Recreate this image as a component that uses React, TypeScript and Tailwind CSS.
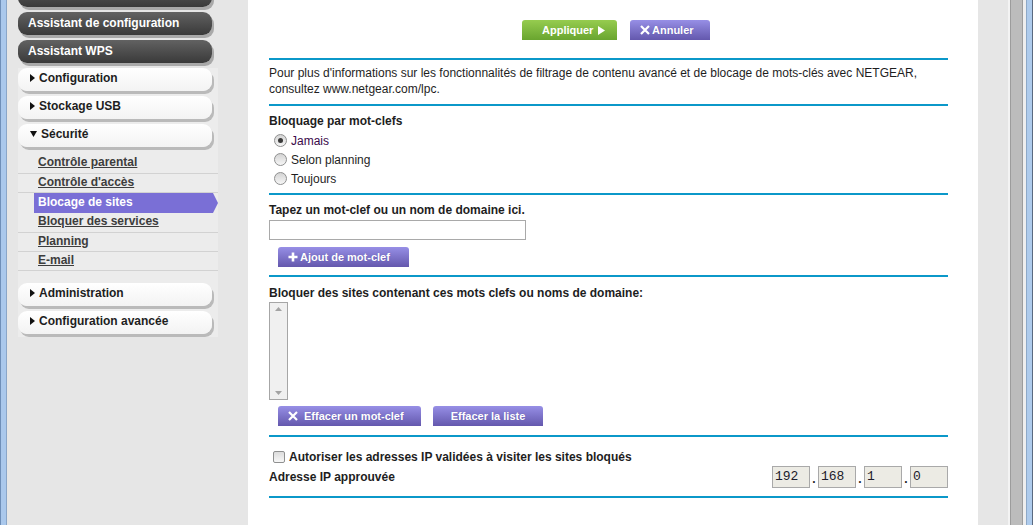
import React from "react";

function Tri({ down = false }: { down?: boolean }) {
  return down ? (
    <svg width="7" height="6" viewBox="0 0 7 6" className="shrink-0">
      <polygon points="0,0 7,0 3.5,6" fill="#111" />
    </svg>
  ) : (
    <svg width="5" height="8" viewBox="0 0 5 8" className="shrink-0">
      <polygon points="0,0 5,4 0,8" fill="#111" />
    </svg>
  );
}

function DarkBtn({ label, className = "" }: { label: string; className?: string }) {
  return (
    <div
      className={
        "w-[194px] h-[23px] shrink-0 rounded-[9px] bg-linear-to-b from-[#626262] to-[#3a3a3a] shadow-[2px_3px_0_0_#a9a9a9] flex items-center pl-[10px] pb-[2px] text-white font-bold text-[12px] " +
        className
      }
    >
      {label}
    </div>
  );
}

function WhiteBtn({ label, open = false, className = "" }: { label: string; open?: boolean; className?: string }) {
  return (
    <div
      className={
        "w-[194px] h-[23px] shrink-0 rounded-[9px] bg-linear-to-b from-white to-[#f3f3f3] shadow-[2px_3px_0_0_#bababa] flex items-center pl-[12px] pb-[3px] gap-[4px] text-[#1e1e1e] font-bold text-[12px] " +
        className
      }
    >
      <Tri down={open} />
      <span>{label}</span>
    </div>
  );
}

function SubItem({ label, className = "h-[20px]" }: { label: string; className?: string }) {
  return (
    <div className={"border-b border-[#d2d2d2] flex items-center pl-[20px] pb-[3px] text-[#3d3d3d] font-bold underline text-[12px] " + className}>
      {label}
    </div>
  );
}

function Sidebar() {
  return (
    <div className="w-[241px] shrink-0 pl-[11px] flex flex-col">
      <DarkBtn label="" className="mt-[-16px]" />
      <DarkBtn label="Assistant de configuration" className="mt-[5px]" />
      <DarkBtn label="Assistant WPS" className="mt-[5px]" />
      <div className="w-[200px] mt-[5px] bg-[#ececec] flex flex-col pb-[3px]">
        <WhiteBtn label="Configuration" />
        <WhiteBtn label="Stockage USB" className="mt-[5px]" />
        <WhiteBtn label="Sécurité" open className="mt-[5px]" />
        <div className="mt-[7px] flex flex-col">
          <SubItem label="Contrôle parental" className="h-[20px]" />
          <SubItem label="Contrôle d'accès" className="h-[19px]" />
          <div className="h-[20px] ml-[16px] pl-[4px] pb-[3px] flex items-center bg-[#7a6fd6] text-white font-bold text-[12px] [clip-path:polygon(0_0,calc(100%-5px)_0,100%_50%,calc(100%-5px)_100%,0_100%)]">
            Blocage de sites
          </div>
          <SubItem label="Bloquer des services" className="h-[20px]" />
          <SubItem label="Planning" className="h-[19px]" />
          <SubItem label="E-mail" className="h-[19px]" />
        </div>
        <WhiteBtn label="Administration" className="mt-[12px]" />
        <WhiteBtn label="Configuration avancée" className="mt-[5px]" />
      </div>
    </div>
  );
}

function Line({ className = "" }: { className?: string }) {
  return <div className={"h-[2px] w-[679px] bg-[#0b98c9] " + className} />;
}

function XIcon() {
  return (
    <svg width="10" height="10" viewBox="0 0 10 10" className="shrink-0">
      <path d="M1 1 L9 9 M9 1 L1 9" stroke="white" strokeWidth="2.2" />
    </svg>
  );
}

function PlusIcon() {
  return (
    <svg width="10" height="10" viewBox="0 0 10 10" className="shrink-0">
      <path d="M5 0.5 V9.5 M0.5 5 H9.5" stroke="white" strokeWidth="2.6" />
    </svg>
  );
}

function PurpleBtn({ children, className = "" }: { children: React.ReactNode; className?: string }) {
  return (
    <div
      className={
        "h-[20px] rounded-t-[3px] bg-linear-to-b from-[#978fe6] to-[#6458ad] flex items-center text-white font-bold text-[11px] [text-shadow:0_0_1px_rgba(80,70,150,0.6)] " +
        className
      }
    >
      {children}
    </div>
  );
}

function Radio({ checked = false, label }: { checked?: boolean; label: string }) {
  return (
    <div className="h-[19px] flex items-center pl-[5px] gap-[4px]">
      <div className="w-[13px] h-[13px] rounded-full border border-[#8f9090] bg-linear-to-b from-[#d4d4d4] to-[#f6f6f6] flex items-center justify-center">
        {checked && <div className="w-[5px] h-[5px] rounded-full bg-[#3a3a3a]" />}
      </div>
      <span className={checked ? "text-[#3a0a4a]" : ""}>{label}</span>
    </div>
  );
}

function IpBox({ v }: { v: string }) {
  return (
    <div className="w-[38px] h-[22px] border border-[#a9a9a9] bg-[#ecebe4] flex items-center pl-[2px] font-['Liberation_Mono','Courier_New',monospace] text-[13px] text-[#1c1c2c]">
      {v}
    </div>
  );
}

function Dot() {
  return <div className="w-[8px] h-[22px] flex items-end justify-center pb-[3px] font-bold leading-none text-[12px]">.</div>;
}

function Main() {
  return (
    <div className="w-[730px] shrink-0 bg-white pl-[21px] pr-[30px] text-[#1e1e1e] text-[12px]">
      <div className="flex pt-[20px] pl-[253px] gap-[13px]">
        <div className="w-[95px] h-[20px] rounded-t-[3px] bg-linear-to-b from-[#96cc4f] to-[#69a52f] flex items-center pl-[20px] gap-[5px] text-white font-bold text-[11px]">
          <span>Appliquer</span>
          <svg width="7" height="9" viewBox="0 0 7 9">
            <polygon points="0,0 7,4.5 0,9" fill="white" />
          </svg>
        </div>
        <PurpleBtn className="w-[80px] pl-[10px] gap-[2px]">
          <XIcon />
          <span>Annuler</span>
        </PurpleBtn>
      </div>
      <Line className="mt-[18px]" />
      <p className="pt-[5px] leading-[16px]">
        Pour plus d'informations sur les fonctionnalités de filtrage de contenu avancé et de blocage de mots-clés avec NETGEAR,
        <br />
        consultez www.netgear.com/lpc.
      </p>
      <Line className="mt-[7px]" />
      <div className="pt-[6px] leading-[19px] font-bold">Bloquage par mot-clefs</div>
      <Radio checked label="Jamais" />
      <Radio label="Selon planning" />
      <Radio label="Toujours" />
      <Line className="mt-[5px]" />
      <div className="pt-[7px] leading-[16px] font-bold">Tapez un mot-clef ou un nom de domaine ici.</div>
      <div className="mt-[2px] w-[257px] h-[20px] border border-[#a9a9a9] bg-white" />
      <PurpleBtn className="mt-[7px] ml-[9px] w-[131px] pl-[10px] gap-[2px]">
        <PlusIcon />
        <span>Ajout de mot-clef</span>
      </PurpleBtn>
      <Line className="mt-[8px]" />
      <div className="pt-[8px] leading-[16px] font-bold">Bloquer des sites contenant ces mots clefs ou noms de domaine:</div>
      <div className="mt-[1px] w-[19px] h-[98px] border border-[#a6a6a6] bg-[#f0f0f0] flex flex-col justify-between items-center py-[4px]">
        <svg width="7" height="4" viewBox="0 0 7 4">
          <polygon points="3.5,0 7,4 0,4" fill="#a3a3a3" />
        </svg>
        <svg width="7" height="4" viewBox="0 0 7 4">
          <polygon points="0,0 7,0 3.5,4" fill="#a3a3a3" />
        </svg>
      </div>
      <div className="mt-[6px] ml-[9px] flex gap-[12px]">
        <PurpleBtn className="w-[143px] pl-[10px] gap-[6px]">
          <XIcon />
          <span>Effacer un mot-clef</span>
        </PurpleBtn>
        <PurpleBtn className="w-[110px] justify-center">
          <span>Effacer la liste</span>
        </PurpleBtn>
      </div>
      <Line className="mt-[9px]" />
      <div className="mt-[10px] h-[19px] flex items-center pl-[4px] gap-[4px] font-bold">
        <div className="w-[12px] h-[12px] rounded-[2px] border border-[#8f9090] bg-linear-to-b from-[#dcdcdc] to-[#f7f7f7]" />
        <span>Autoriser les adresses IP validées à visiter les sites bloqués</span>
      </div>
      <div className="w-[679px] h-[22px] flex items-center justify-between">
        <span className="font-bold">Adresse IP approuvée</span>
        <div className="flex items-center">
          <IpBox v="192" />
          <Dot />
          <IpBox v="168" />
          <Dot />
          <IpBox v="1" />
          <Dot />
          <IpBox v="0" />
        </div>
      </div>
      <Line className="mt-[8px]" />
    </div>
  );
}

export default function App() {
  return (
    <div className="w-[1033px] h-[525px] flex overflow-hidden bg-[#e6e6e6] font-['Liberation_Sans',Arial,sans-serif] text-[12px]">
      <div className="flex shrink-0">
        <div className="w-px bg-[#6f8fb8]" />
        <div className="w-[5px] bg-[#aac8ec]" />
        <div className="w-px bg-[#8aa6c8]" />
      </div>
      <Sidebar />
      <Main />
      <div className="w-[30px] shrink-0" />
      <div className="flex shrink-0">
        <div className="w-[2px] bg-[#f3f3f3]" />
        <div className="w-[13px] bg-[#bcbcbc] border-x border-[#9c9c9c]" />
        <div className="w-[3px] bg-[#eeeeee]" />
        <div className="w-px bg-[#8ea9c8]" />
        <div className="w-[5px] bg-[#aecbec]" />
        <div className="w-px bg-[#5a6a80]" />
      </div>
    </div>
  );
}
